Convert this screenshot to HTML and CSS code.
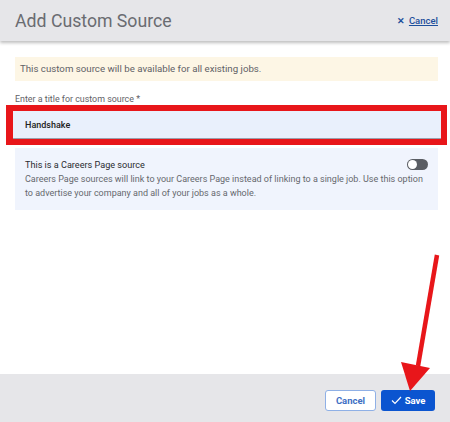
FILE: index.html
```html
<!DOCTYPE html>
<html lang="en">
<head>
    <meta charset="UTF-8">
    <title>Add Custom Source</title>
    <link rel="stylesheet" href="styles.css">
</head>
<body>
    <div class="modal">
        <div class="header">
            <h1 class="title">Add Custom Source</h1>
            <a class="cancel-link" href="#"><span class="x">&#x2715;</span> <u>Cancel</u></a>
        </div>

        <div class="content">
            <div class="notice">This custom source will be available for all existing jobs.</div>

            <label class="field-label" for="title">Enter a title for custom source *</label>
            <div class="highlight">
                <input id="title" type="text" value="Handshake">
            </div>

            <div class="careers">
                <div class="careers-top">
                    <span class="careers-title">This is a Careers Page source</span>
                    <span class="toggle"><span class="knob"></span></span>
                </div>
                <p class="careers-desc">Careers Page sources will link to your Careers Page instead of linking to a single job. Use this option to advertise your company and all of your jobs as a whole.</p>
            </div>
        </div>

        <div class="footer">
            <button class="btn btn-outline">Cancel</button>
            <button class="btn btn-primary"><svg width="11" height="9" viewBox="0 0 11 9"><path d="M1 4.5 L4 7.5 L10 1" fill="none" stroke="#fff" stroke-width="1.2"/></svg> Save</button>
        </div>

        <svg class="arrow" width="450" height="422" viewBox="0 0 450 422">
            <line x1="437" y1="255" x2="418" y2="366" stroke="#e8161a" stroke-width="4.5"/>
            <polygon points="401,362 430,368 410,391" fill="#e8161a"/>
        </svg>
    </div>
</body>
</html>
```
FILE: styles.css
```css
* {
    margin: 0;
    padding: 0;
    box-sizing: border-box;
}

body {
    font-family: Roboto, "Liberation Sans", sans-serif;
    background: #fff;
    width: 450px;
    height: 422px;
    overflow: hidden;
}

.modal {
    position: relative;
    width: 450px;
    height: 422px;
    display: flex;
    flex-direction: column;
}

.header {
    height: 41px;
    background: #e6e6e9;
    display: flex;
    align-items: center;
    justify-content: space-between;
    padding: 0 12px 0 15px;
    box-shadow: 0 2px 3px rgba(0, 0, 0, 0.25);
    position: relative;
    z-index: 1;
}

.title {
    font-size: 17.7px;
    font-weight: 400;
    color: #6a6c71;
}

.cancel-link {
    font-size: 9.5px;
    color: #1d4f9c;
    text-decoration: none;
    font-weight: 500;
}

.cancel-link .x {
    font-size: 8.5px;
    font-weight: 700;
    margin-right: 2px;
}

.content {
    flex: 1;
    padding: 16px 12px 0 15px;
}

.notice {
    background: #fdf6e5;
    color: #5f6166;
    font-size: 9.7px;
    padding: 6px 5px;
    height: 24px;
    line-height: 12px;
}

.field-label {
    display: block;
    font-size: 8.9px;
    line-height: 12px;
    color: #5f6166;
    margin-top: 12px;
}

.highlight {
    margin: 0 -9px 0 -9px;
    border: 6px solid #e8161a;
    border-left-width: 7px;
    height: 40px;
}

.highlight input {
    display: block;
    width: 100%;
    height: 28px;
    border: none;
    border-bottom: 1px solid #9aa0ad;
    background: #e9f0fc;
    font-family: inherit;
    font-size: 9px;
    font-weight: 500;
    color: #222;
    padding: 0 0 0 12px;
    outline: none;
}

.careers {
    margin-top: 3px;
    background: #f0f4fd;
    padding: 11px 10px 10px 10px;
}

.careers-top {
    display: flex;
    justify-content: space-between;
    align-items: center;
}

.careers-title {
    font-size: 9.1px;
    color: #2a2c30;
}

.toggle {
    width: 21px;
    height: 11px;
    border-radius: 6px;
    background: #5a5d63;
    position: relative;
}

.knob {
    position: absolute;
    left: 1px;
    top: 1px;
    width: 9px;
    height: 9px;
    border-radius: 50%;
    background: #fff;
}

.careers-desc {
    font-size: 9px;
    color: #66686d;
    line-height: 14px;
    margin-top: 2px;
}

.footer {
    height: 48px;
    background: #e6e6e9;
    display: flex;
    justify-content: flex-end;
    align-items: center;
    gap: 5px;
    padding: 4px 15px 0 0;
}

.btn {
    height: 21px;
    font-family: inherit;
    font-size: 9.5px;
    font-weight: 700;
    border-radius: 3px;
    display: flex;
    align-items: center;
    justify-content: center;
    gap: 3px;
}

.btn-outline {
    width: 51px;
    background: #fff;
    color: #3e6fc4;
    border: 1px solid #8fb0e6;
}

.btn-primary {
    width: 54px;
    background: #0b55d0;
    color: #fff;
    border: none;
}

.arrow {
    position: absolute;
    left: 0;
    top: 0;
    pointer-events: none;
    z-index: 2;
}
```
